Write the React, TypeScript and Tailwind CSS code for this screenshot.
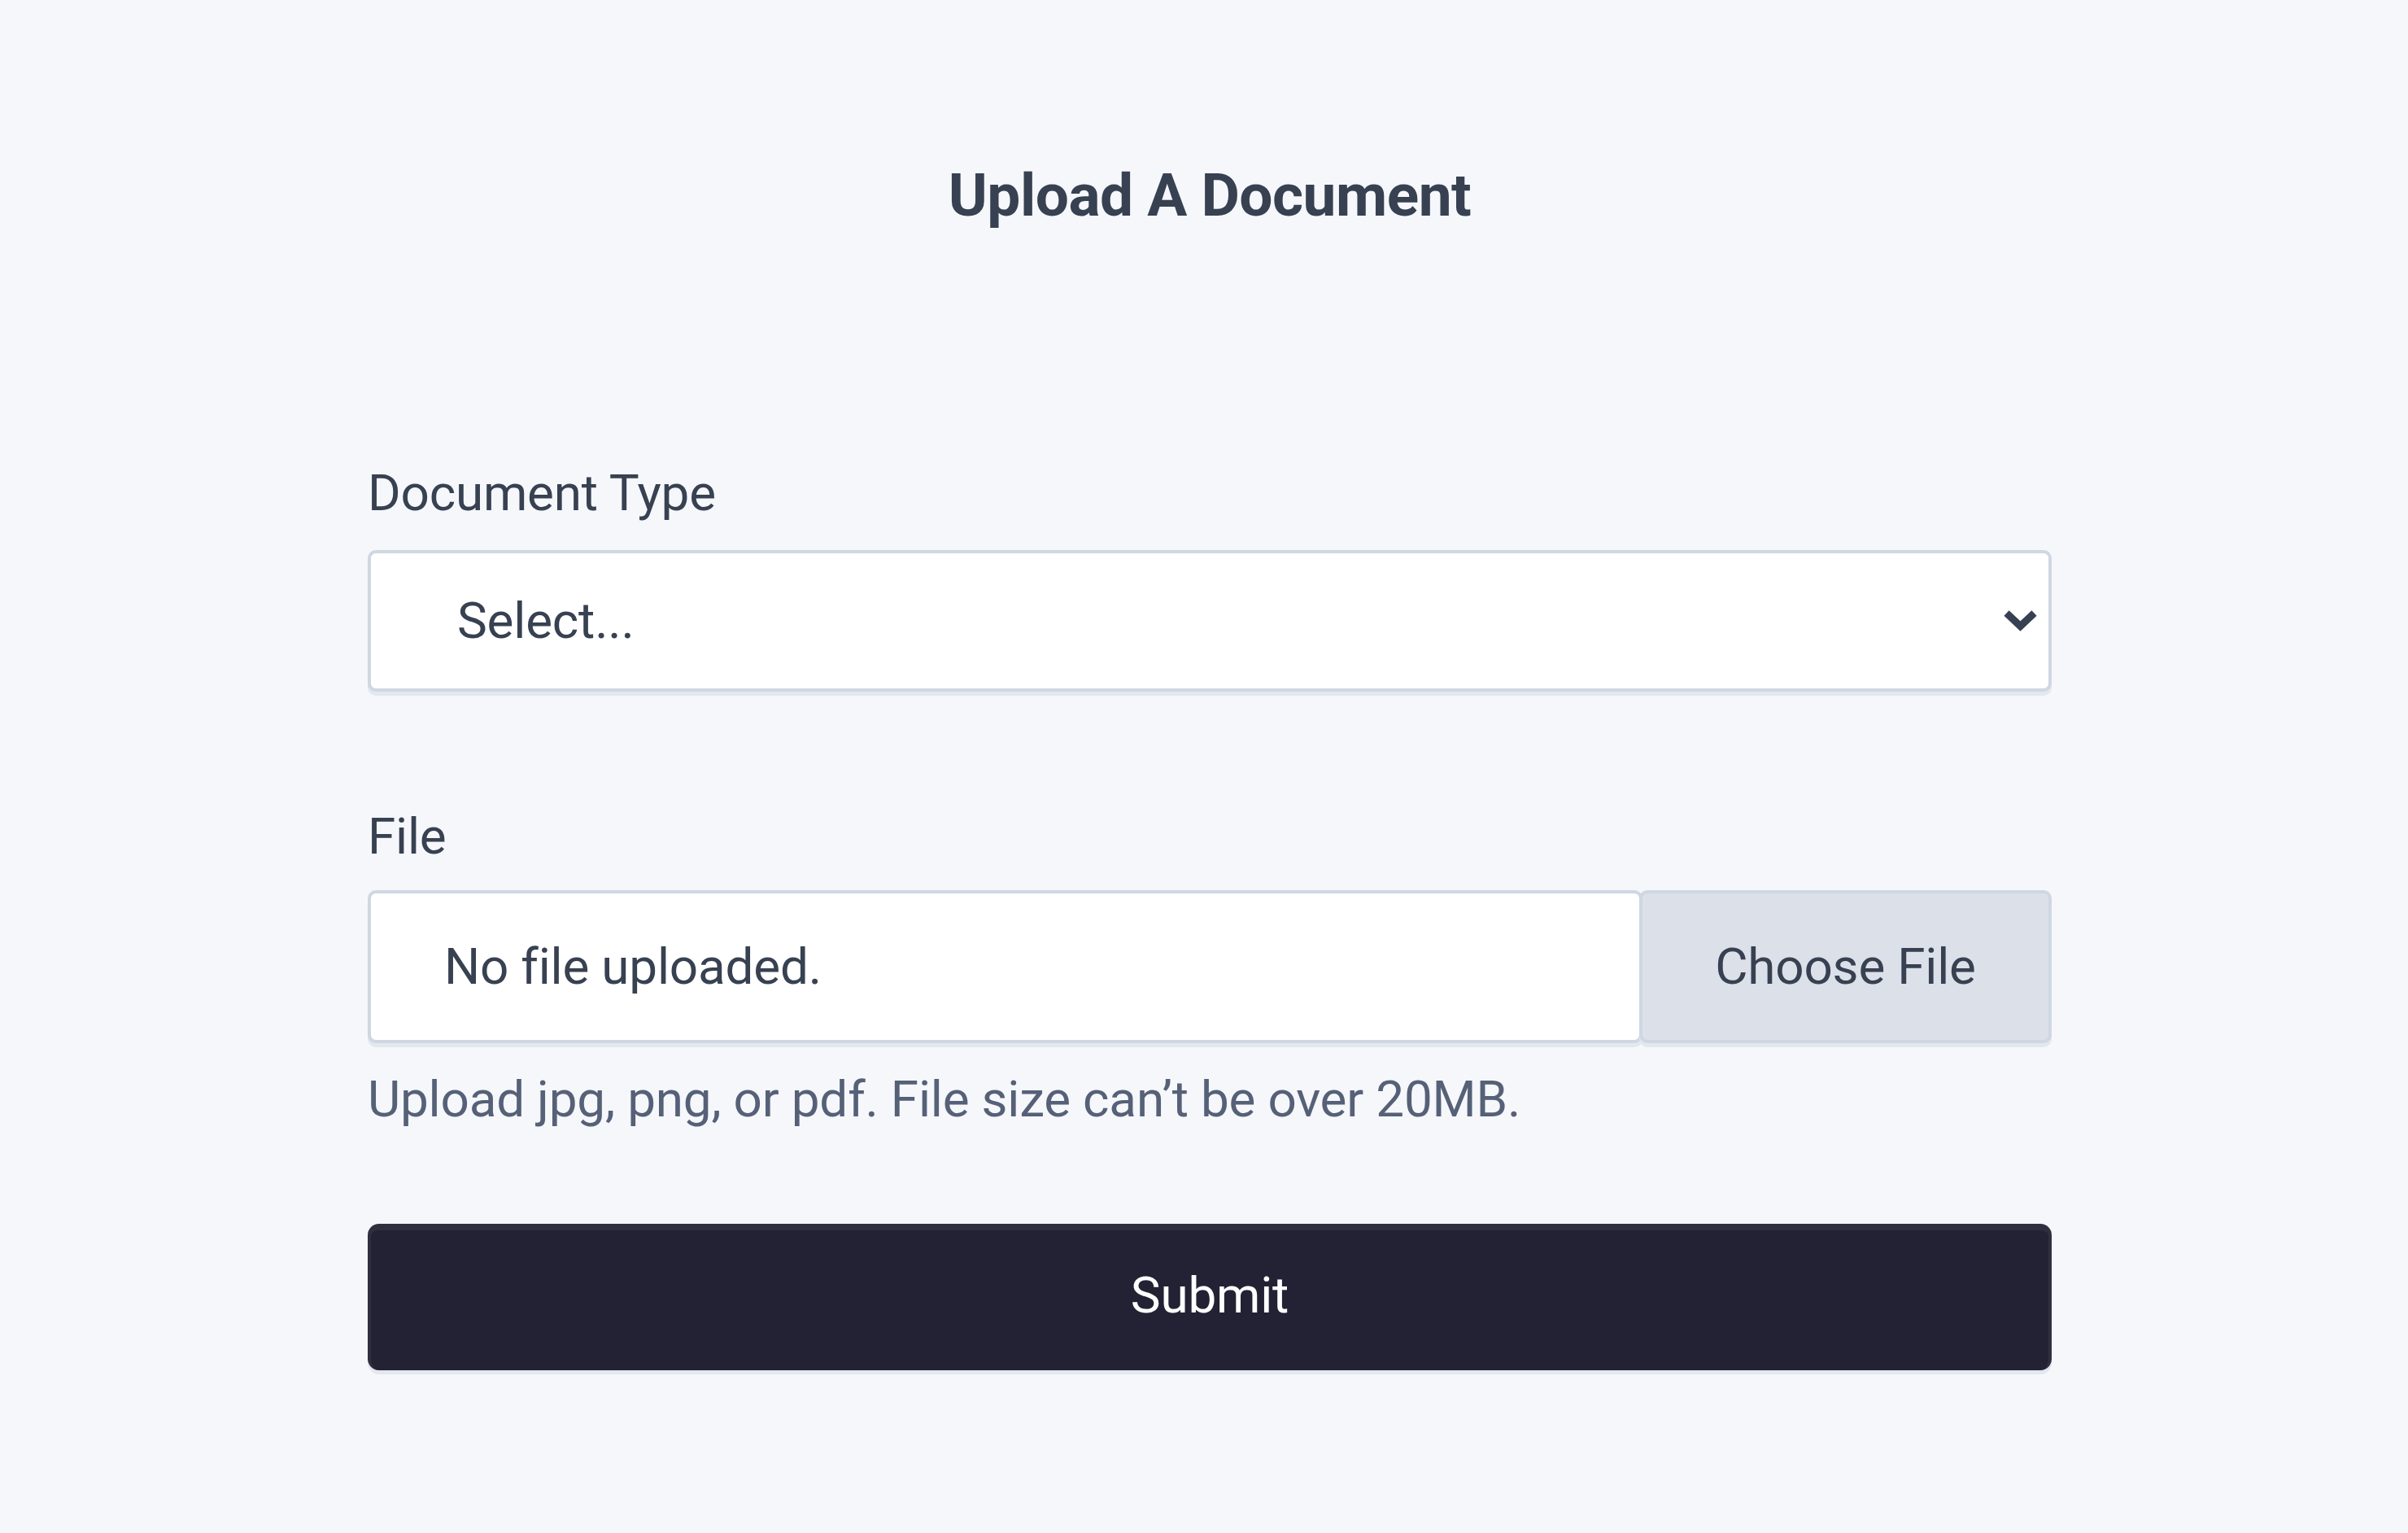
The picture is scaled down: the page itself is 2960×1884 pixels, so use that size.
import { useState } from 'react'

export default function App() {
  const [fileName] = useState<string | null>(null)

  return (
    <main
      className="min-h-screen bg-[#f5f7fb] pl-[14px] text-[#374151]"
      style={{ fontFamily: 'Roboto, "Liberation Sans", sans-serif' }}
    >
      <div className="mx-auto w-[2070px] pt-[204px]">
        <h1 className="text-center text-[73px] font-bold leading-none tracking-[-0.5px]">
          Upload A Document
        </h1>

        <form className="mt-[298px]" onSubmit={(e) => e.preventDefault()}>
          <label className="block text-[62px] leading-none tracking-[-0.2px]">Document Type</label>
          <div className="mt-[39px] flex h-[174px] items-center justify-between rounded-[10px] border-4 border-[#cfd7e2] bg-white pl-[106px] pr-[14px] shadow-[0_5px_0_0_#e3e7ee]">
            <span className="text-[62px] leading-none tracking-[-0.2px]">Select...</span>
            <svg width="41" height="26" viewBox="0 0 41 26" className="text-[#374151]">
              <polyline
                points="3.5,3.5 20.5,19.5 37.5,3.5"
                fill="none"
                stroke="currentColor"
                strokeWidth="9"
                strokeLinejoin="miter"
              />
            </svg>
          </div>

          <label className="mt-[147px] block text-[62px] leading-none tracking-[-0.2px]">File</label>
          <div className="mt-[35px] flex h-[188px]">
            <div className="flex flex-1 items-center rounded-[10px] border-4 border-[#cfd7e2] bg-white pl-[90px] shadow-[0_5px_0_0_#e3e7ee]">
              <span className="text-[62px] leading-none tracking-[-0.2px]">
                {fileName ?? 'No file uploaded.'}
              </span>
            </div>
            <button
              type="button"
              className="-ml-[4px] flex w-[507px] items-center justify-center rounded-[10px] border-4 border-[#cfd7e2] bg-[#dce0e9] text-[62px] leading-none tracking-[-0.2px] text-[#374151] shadow-[0_5px_0_0_#e3e7ee]"
            >
              Choose File
            </button>
          </div>
          <p className="mt-[38px] text-[62px] leading-none tracking-[-0.2px] text-[#566178]">
            Upload jpg, png, or pdf. File size can’t be over 20MB.
          </p>

          <button
            type="submit"
            className="mt-[122px] flex h-[180px] w-full items-center justify-center rounded-[14px] border-x-4 border-t-[8px] border-b-0 border-[#302f40] bg-[#222234] pb-[12px] text-[62px] leading-none tracking-[-0.2px] text-white shadow-[0_5px_0_0_#e3e7ee]"
          >
            Submit
          </button>
        </form>
      </div>
    </main>
  )
}
